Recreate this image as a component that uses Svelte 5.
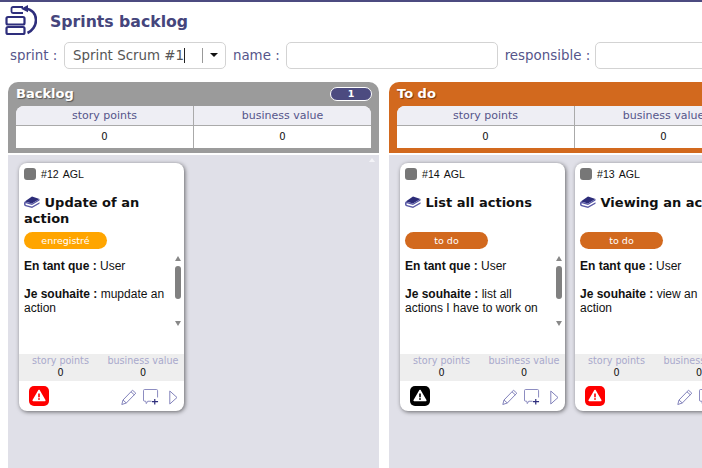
<script>
  const base = { spLabel: 'story points', bvLabel: 'business value' }

  const columns = [
    {
      name: 'Backlog',
      colour: 'grey',
      count: 1,
      cards: [
        { id: 12, title: 'Update of an action', state: 'enregistré', stateClass: 'saved', wish: 'mupdate an action', alert: 'red' }
      ]
    },
    {
      name: 'To do',
      colour: 'orange',
      cards: [
        { id: 14, title: 'List all actions', state: 'to do', stateClass: 'todo', wish: 'list all actions I have to work on', alert: 'black' },
        { id: 13, title: 'Viewing an action', state: 'to do', stateClass: 'todo', wish: 'view an action', alert: 'red' }
      ]
    }
  ]
</script>

<div class="page">
  <header>
    <svg class="logo" viewBox="0 0 32 32" width="32" height="32" fill="none" stroke="#2e2e7c" stroke-width="2.2">
      <path d="M18 3H8a1.500 1.500 0 0 0-1.500 1.500v3A1.500 1.500 0 0 0 8 9h10" stroke-width="1.800" />
      <rect x="1.500" y="13" width="18" height="7.500" rx="1.500" />
      <rect x="1.500" y="23" width="18" height="7" rx="1.500" />
      <path d="M20 4.500C27 5 31 10 31 16c0 6-4 11-8.500 13" stroke-width="2.600" />
      <path d="M23 1l-7 3.800 7 3.400z" fill="#2e2e7c" stroke="none" />
    </svg>
    <h1>Sprints backlog</h1>
  </header>

  <div class="filters">
    <label for="sprint">sprint :</label>
    <div class="combo">
      <span id="sprint" class="combo-value">Sprint Scrum #1<i class="caret"></i></span>
      <span class="combo-btn"><i class="arrow"></i></span>
    </div>
    <label for="name">name :</label>
    <input id="name" class="name" />
    <label for="resp">responsible :</label>
    <input id="resp" class="resp" />
  </div>

  <div class="board">
    {#each columns as col}
      <section class="column">
        <div class="col-head {col.colour}">
          <div class="col-title">
            <h2>{col.name}</h2>
            {#if col.count}<span class="count">{col.count}</span>{/if}
          </div>
          <div class="totals">
            <div class="th">{base.spLabel}</div>
            <div class="th">{base.bvLabel}</div>
            <div class="td">0</div>
            <div class="td">0</div>
          </div>
        </div>
        <div class="col-body">
          {#if col.count}<span class="body-up"></span>{/if}
          {#each col.cards as card}
            <article class="card">
              <div class="card-top">
                <span class="dot"></span>
                <span class="ref">#{card.id}</span>
                <span class="ref">AGL</span>
              </div>
              <h3>
                <svg class="book" viewBox="0 0 16 12" width="16" height="12">
                  <path d="M8 .5 15.500 3 8 7.500.8 5.500z" fill="#2c2c78" />
                  <path d="M.8 5.500 8 7.500 15.500 3v1.500L8 9 1.800 7.300c-.6.6-.4 1.400.2 1.600L8 10.500l7.500-4.200v1.400L8 12 1.500 10.300C-.4 9.500-.4 6.600.8 5.500z" fill="#5a5aa6" />
                </svg>
                {card.title}
              </h3>
              <span class="state {card.stateClass}">{card.state}</span>
              <div class="story">
                <div class="story-text">
                  <p><b>En tant que :</b> User</p>
                  <p><b>Je souhaite :</b> {card.wish}</p>
                </div>
                <div class="scroll">
                  <i class="up"></i>
                  <i class="thumb"></i>
                  <i class="down"></i>
                </div>
              </div>
              <div class="card-stats">
                <div><span>{base.spLabel}</span><b>0</b></div>
                <div><span>{base.bvLabel}</span><b>0</b></div>
              </div>
              <div class="card-foot">
                <span class="alert {card.alert}">
                  <svg viewBox="0 0 20 20" width="20" height="20">
                    <path d="M10 4.500 15.800 14.500H4.200z" fill="#fff" stroke="#fff" stroke-width="1.500" stroke-linejoin="round" />
                    <rect x="9.200" y="7.500" width="1.600" height="3.800" fill={card.alert === 'red' ? '#f00' : '#000'} />
                    <rect x="9.200" y="12.200" width="1.600" height="1.600" fill={card.alert === 'red' ? '#f00' : '#000'} />
                  </svg>
                </span>
                <div class="tools">
                  <svg viewBox="0 0 16 16" width="16" height="16" fill="none" stroke="#8282bb" stroke-width="1">
                    <path d="M.8 15.500 2 11 11.500 1.200l3.300 3L5.300 14z" />
                    <path d="M2 11l3.300 3M10 2.800l3.300 3" />
                  </svg>
                  <svg class="comment" viewBox="0 0 17 17" width="16" height="16" fill="none">
                    <path d="M9 13H5l-1.500 2.500L3 13H1.800A1.300 1.300 0 0 1 .5 11.700V1.800A1.300 1.300 0 0 1 1.800.5h12.400a1.300 1.300 0 0 1 1.300 1.300V9" stroke="#8282bb" />
                    <path d="M12.500 10.500v6M9.500 13.500h6.500" stroke="#2e2e7c" stroke-width="1.300" />
                  </svg>
                  <svg class="play" viewBox="0 0 9 15" width="9" height="15" fill="none" stroke="#8282bb">
                    <path d="M.8 1 8 7.500.8 14z" />
                  </svg>
                </div>
              </div>
            </article>
          {/each}
        </div>
      </section>
    {/each}
  </div>
</div>

<style>
  :global(body) {
    margin: 0;
    background: #fff;
    overflow: hidden;
  }
  .page {
    width: 702px;
    height: 468px;
    overflow: hidden;
    border-top: 2px solid #4c4b80;
    box-sizing: border-box;
    font-family: "DejaVu Sans", Verdana, sans-serif;
    color: #4c4b80;
  }
  header {
    display: flex;
    align-items: center;
    height: 36px;
    padding-left: 5px;
  }
  .logo {
    flex: none;
  }
  h1 {
    margin: 2px 0 0 13px;
    font-size: 15.7px;
    font-weight: bold;
    color: #45457c;
  }
  .filters {
    display: flex;
    align-items: center;
    height: 28px;
    margin-top: 3px;
    padding-left: 10px;
    font-size: 13.4px;
    white-space: nowrap;
    color: #55558a;
  }
  .combo {
    display: flex;
    flex: none;
    width: 162px;
    height: 27px;
    margin: 0 7px 0 6.7px;
    border: 1px solid #d3d3d3;
    border-radius: 5px;
    box-sizing: border-box;
    align-items: center;
  }
  .combo-value {
    flex: 1;
    padding-left: 8px;
    font-size: 13.4px;
    color: #555;
  }
  .caret {
    display: inline-block;
    width: 1px;
    height: 15px;
    background: #222;
    vertical-align: -3px;
  }
  .combo-btn {
    display: flex;
    width: 22px;
    height: 15px;
    border-left: 1px solid #999;
    align-items: center;
    justify-content: center;
  }
  .arrow {
    border: 4px solid transparent;
    border-top: 4px solid #111;
    border-bottom: 0;
  }
  input {
    flex: none;
    height: 27px;
    padding: 0;
    border: 1px solid #d3d3d3;
    border-radius: 5px;
    box-sizing: border-box;
    background: #fff;
  }
  .name {
    width: 212px;
    margin: 0 7px 0 6px;
  }
  .resp {
    width: 200px;
    margin-left: 5px;
  }
  .board {
    display: flex;
    gap: 10px;
    margin-top: 13px;
    padding-left: 8px;
  }
  .column {
    display: flex;
    flex: none;
    flex-direction: column;
    width: 371px;
    height: 386px;
  }
  .col-head {
    height: 71px;
    padding: 0 8px;
    border-radius: 10px 10px 0 0;
    box-sizing: border-box;
  }
  .grey {
    background: #9b9b9b;
  }
  .orange {
    background: #d2691e;
  }
  .col-title {
    display: flex;
    height: 24px;
    align-items: center;
    justify-content: space-between;
  }
  h2 {
    margin: -2px 0 0;
    font-size: 13px;
    font-weight: bold;
    color: #fff;
    text-shadow: 1px 1px 1px rgba(0, 0, 0, .45);
  }
  .count {
    width: 40px;
    height: 12px;
    margin-right: -1px;
    border: 1px solid #fff;
    border-radius: 7px;
    background: #4c4b80;
    color: #fff;
    font-size: 9.5px;
    font-weight: bold;
    line-height: 12px;
    text-align: center;
  }
  .totals {
    display: grid;
    grid-template-columns: 178px 177px;
    grid-template-rows: 20px 22px;
    border-radius: 8px 8px 0 0;
    overflow: hidden;
    background: #fff;
    font-size: 11px;
    text-align: center;
  }
  .th {
    background: #eeeef4;
    border-bottom: 1px solid #aaa;
    box-sizing: border-box;
    line-height: 19px;
    color: #55558a;
  }
  .td {
    line-height: 22px;
    color: #111;
    font-size: 10px;
  }
  .th:nth-child(odd),
  .td:nth-child(odd) {
    border-right: 1px solid #aaa;
  }
  .col-body {
    position: relative;
    display: flex;
    flex: 1;
    gap: 10px;
    margin-top: 2px;
    padding: 8px 11px;
    background: #e0e0e8;
  }
  .body-up {
    position: absolute;
    top: 3px;
    right: 4px;
    border: 3px solid transparent;
    border-bottom: 4px solid #f4f4f8;
    border-top: 0;
  }
  .card {
    display: flex;
    flex: none;
    flex-direction: column;
    width: 165px;
    height: 248px;
    border-radius: 8px;
    background: #fff;
    box-shadow: 1px 1px 4px rgba(0, 0, 0, .55);
    color: #111;
    overflow: hidden;
  }
  .card-top {
    display: flex;
    height: 21px;
    align-items: center;
    gap: 4px;
    padding-left: 5px;
    font-family: "Liberation Sans", Arial, sans-serif;
    font-size: 10.6px;
  }
  .dot {
    width: 12px;
    height: 12px;
    margin-right: 1px;
    border-radius: 3px;
    background: #777;
  }
  .card h3 {
    height: 34px;
    margin: 11px 0 0;
    padding-left: 5px;
    font-size: 13px;
    font-weight: bold;
    line-height: 16px;
    color: #111;
  }
  .book {
    vertical-align: -1px;
  }
  .state {
    width: 83px;
    height: 17px;
    margin: 3px 0 0 5px;
    border-radius: 9px;
    color: #fff;
    font-size: 9.5px;
    line-height: 17px;
    text-align: center;
  }
  .saved {
    background: #ffa500;
  }
  .todo {
    background: #d2691e;
  }
  .story {
    display: flex;
    flex: 1;
    min-height: 0;
    margin-top: 10px;
    padding-left: 5px;
    font-family: "Liberation Sans", Arial, sans-serif;
    font-size: 12px;
    line-height: 14px;
  }
  .story-text {
    flex: 1;
    padding-right: 8px;
  }
  .story p {
    margin: 0 0 14px;
  }
  .scroll {
    display: flex;
    flex: none;
    flex-direction: column;
    width: 10px;
    height: 74px;
    margin: -5px 1px 0 0;
    align-items: center;
    padding-top: 2px;
    box-sizing: border-box;
  }
  .up {
    border: 3px solid transparent;
    border-bottom: 5px solid #888;
    border-top: 0;
  }
  .thumb {
    width: 6px;
    height: 33px;
    margin: 5px 0 auto;
    border-radius: 3px;
    background: #808080;
  }
  .down {
    border: 3px solid transparent;
    border-top: 5px solid #888;
    border-bottom: 0;
    margin-bottom: 2px;
  }
  .card-stats {
    display: grid;
    grid-template-columns: 83px 82px;
    height: 27px;
    background: #eee;
    font-size: 9.6px;
    text-align: center;
  }
  .card-stats div {
    display: flex;
    flex-direction: column;
    padding-top: 1px;
  }
  .card-stats span {
    color: #a9a9cc;
    line-height: 12px;
  }
  .card-stats b {
    font-weight: normal;
    color: #111;
    line-height: 12px;
  }
  .card-foot {
    display: flex;
    height: 30px;
    align-items: center;
    justify-content: space-between;
    padding: 0 6px 0 10px;
  }
  .alert {
    display: flex;
    width: 20px;
    height: 20px;
    border-radius: 5px;
  }
  .alert.red {
    background: #f00;
  }
  .alert.black {
    background: #000;
  }
  .tools {
    display: flex;
    align-items: center;
    gap: 6px;
    margin-top: 2px;
  }
  .play {
    margin-left: 4px;
  }
</style>
